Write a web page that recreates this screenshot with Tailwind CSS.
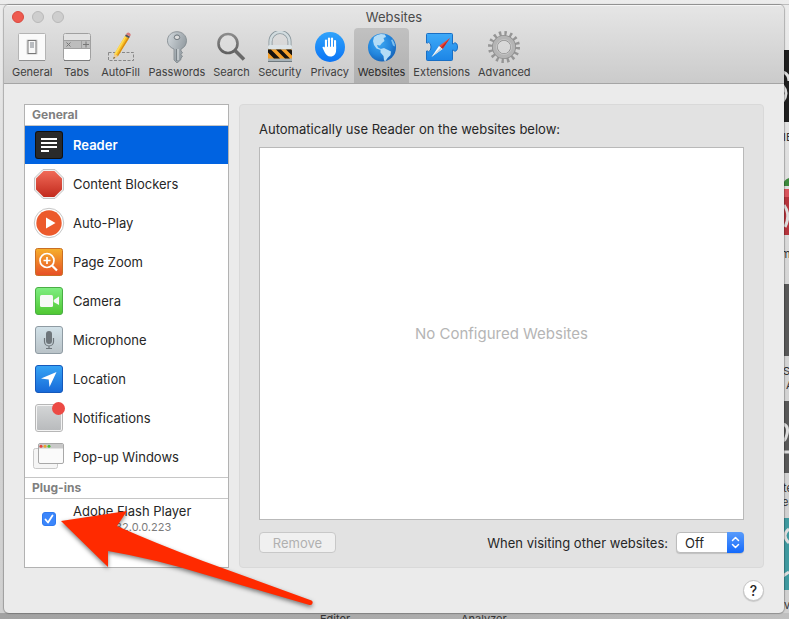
<!DOCTYPE html>
<html lang="en">
<head>
    <meta charset="UTF-8">
    <meta name="viewport" content="width=device-width, initial-scale=1.0">
    <title>Websites</title>
    <script src="https://cdn.jsdelivr.net/npm/@tailwindcss/browser@4"></script>
</head>
<body class="relative flex min-h-screen overflow-hidden bg-[#cfcfcf] pt-[5px] pr-[5px] pb-[6px] pl-1 font-['Inter',sans-serif] text-[13px] leading-4 text-[#262626]">

    <!-- Desktop behind the window -->
    <div class="absolute inset-0 overflow-hidden bg-linear-to-b from-[#ececec] via-[#d4d4d4] to-[#d0d0d0] text-[11px] leading-3 text-[#333]" aria-hidden="true">
        <div class="absolute top-1 right-0 left-0 h-px bg-[#bdbdbd]"></div>
        <div class="absolute right-0 bottom-0 left-0 h-[6px] bg-linear-to-r from-[#a2a2a2] via-[#ababab] to-[#c0c0c0]"></div>
        <span class="absolute top-[613px] left-[320px]">Editor</span>
        <span class="absolute top-[613px] left-[461px]">Analyzer</span>
        <svg class="absolute top-0 right-0 h-[619px] w-2" viewBox="0 0 8 619">
            <rect y="50" width="8" height="72" fill="#1f1f1f"/>
            <path d="M2 72q6 2 6 9M2 86q6 7 0 15" fill="none" stroke="#ddd" stroke-width="3"/>
            <path d="M2 186q0-6 6-8v8z" fill="#3d8a3d"/>
            <rect y="189" width="8" height="46" fill="#b5343c"/>
            <rect y="189" width="8" height="8" fill="#d9545c"/>
            <path d="M3 205q7 10 1 22" fill="none" stroke="#ddd" stroke-width="3"/>
            <rect y="284" width="8" height="72" fill="#585858"/>
            <rect y="401" width="8" height="72" fill="#585858"/>
            <path d="M2 424q6 2 4 10t-4 6M2 452h6" fill="none" stroke="#ddd" stroke-width="3"/>
            <rect y="518" width="8" height="72" fill="#3f999f"/>
            <path d="M8 529q-8 6 0 14M2 576l6-4" fill="none" stroke="#ddd" stroke-width="3"/>
        </svg>
        <span class="absolute top-[131px] left-[783px]">IE</span>
        <span class="absolute top-[248px] left-[781px]">m</span>
        <span class="absolute top-[365px] left-[783px]">S</span>
        <span class="absolute top-[379px] left-[786px]">A</span>
        <span class="absolute top-[482px] left-[783px]">te</span>
        <span class="absolute top-[496px] left-[782px]">ea</span>
        <span class="absolute top-[599px] left-[784px]">v</span>
    </div>

    <div class="relative flex min-w-0 flex-1 flex-col overflow-hidden rounded-[5px] bg-[#ebebeb] shadow-[0_0_1px_1px_rgba(0,0,0,0.25)]">

        <!-- Title bar and toolbar -->
        <header class="border-b border-[#a5a5a5] bg-linear-to-b from-[#e6e6e6] to-[#cbcbcb] shadow-[inset_0_1px_0_#f6f6f6]">
            <div class="relative flex h-[23px] items-center justify-center">
                <div class="absolute left-2 flex gap-2">
                    <button class="size-3 rounded-full border border-[#d9493f] bg-[#ee5b50]" aria-label="Close"></button>
                    <button class="size-3 rounded-full border border-[#b9b9b9] bg-[#cecece]" aria-label="Minimize"></button>
                    <button class="size-3 rounded-full border border-[#b9b9b9] bg-[#cecece]" aria-label="Zoom"></button>
                </div>
                <h1 class="text-[#4a4a4a]">Websites</h1>
            </div>

            <nav class="flex h-[55px] pl-1 text-[11px] leading-4 text-[#404040]">
                <button class="flex min-w-10 flex-col items-center gap-px px-1 pt-[3px]">
                    <svg class="size-8" viewBox="0 0 32 32">
                        <rect x="2.500" y="2.500" width="27" height="27" rx="1" fill="#fafafa" stroke="#b4b4b4"/>
                        <path d="M3 29.500h26" stroke="#8f8f8f"/>
                        <rect x="10" y="8" width="12" height="16" rx="2" fill="#e4e4e4"/>
                        <rect x="12" y="9.500" width="8" height="13" fill="#f8f8f8" stroke="#777"/>
                        <rect x="14" y="11" width="4" height="6" fill="#b9bcc0"/>
                    </svg>
                    General
                </button>
                <button class="flex min-w-10 flex-col items-center gap-px px-1 pt-[3px]">
                    <svg class="size-8" viewBox="0 0 32 32">
                        <rect x="2.500" y="2.500" width="27" height="27" rx="2" fill="#fff" stroke="#a0a0a0"/>
                        <path d="M3 5q0-2 2-2h22q2 0 2 2v4H3z" fill="#e2e2e2"/>
                        <path d="M3 9h26v8H3z" fill="#bdbdbd"/>
                        <path d="M3 9.500h26M3 17.500h26M20.500 10v7" stroke="#a0a0a0"/>
                        <path d="M5.500 11.500l4 4m0-4l-4 4M22 13.500h6M25 10.500v6" stroke="#777"/>
                        <path d="M3 29.500h26" stroke="#7c7c7c"/>
                    </svg>
                    Tabs
                </button>
                <button class="flex min-w-12 flex-col items-center gap-px px-1 pt-[3px]">
                    <svg class="size-8" viewBox="0 0 32 32">
                        <rect x="3.500" y="21.500" width="25" height="8" fill="none" stroke="#888" stroke-dasharray="3 1.500"/>
                        <path d="M8.500 28l.8-5L20 5l4 2.300L13 25z" fill="#f6bd22"/>
                        <path d="M9.300 23L20 5l1.300.8L10.800 24z" fill="#ffdc57"/>
                        <path d="M12 24.500L22.700 6.500l1.300.8L13 25z" fill="#d88b13"/>
                        <path d="M8.500 28l.8-5 3.700 2z" fill="#ecc99a"/>
                        <path d="M8.500 28l.3-2 1.200.7z" fill="#222"/>
                        <path d="M20 5l1-1.800 4 2.300-1 1.800z" fill="#50545a"/>
                        <path d="M21 3.200q1.400-2.500 3.500-1.200t.5 3.500z" fill="#d97a7a"/>
                    </svg>
                    AutoFill
                </button>
                <button class="flex min-w-10 flex-col items-center gap-px px-1 pt-[3px]">
                    <svg class="size-8" viewBox="0 0 32 32">
                        <defs>
                            <linearGradient id="key" x2="1" y2=".6"><stop stop-color="#d4dade"/><stop offset="1" stop-color="#8d969c"/></linearGradient>
                        </defs>
                        <path fill-rule="evenodd" d="M16 .7c5.500 0 9.500 4 9.500 9 0 4-2.300 7-5.500 8.300V20l1.500 1.500-1.500 2 1.500 2-1.500 1.500v1.500L16 32l-3-3V18c-4-1.500-6.500-4.500-6.500-8.300 0-5 4-9 9.500-9zM16 4a2.700 2.300 0 100 4.600A2.700 2.300 0 0016 4z" fill="url(#key)" stroke="#7d868c" stroke-width=".8"/>
                        <path d="M15.500 18v12" stroke="#7b8388" stroke-width="1.200"/>
                        <path d="M17 18v11" stroke="#e4e8ea"/>
                        <ellipse cx="16" cy="6.300" rx="2.700" ry="2.300" fill="#dcdcdc" stroke="#737c82"/>
                    </svg>
                    Passwords
                </button>
                <button class="flex min-w-10 flex-col items-center gap-px px-1 pt-[3px]">
                    <svg class="size-8" viewBox="0 0 32 32">
                        <defs>
                            <linearGradient id="lens" x2="0" y2="1"><stop stop-color="#8b8b8b"/><stop offset="1" stop-color="#606060"/></linearGradient>
                        </defs>
                        <circle cx="13" cy="12.500" r="9.500" fill="#e3e3e3" fill-opacity=".4" stroke="url(#lens)" stroke-width="2.600"/>
                        <path d="M20 19.500l9 9" stroke="#696969" stroke-width="3.600"/>
                    </svg>
                    Search
                </button>
                <button class="flex min-w-[52px] flex-col items-center gap-px px-1 pt-[3px]">
                    <svg class="size-8" viewBox="0 0 32 32">
                        <path d="M6.500 15v-4.500a9.500 9.500 0 0119 0V15" fill="none" stroke="#88959b" stroke-width="4"/>
                        <path d="M6.500 15v-4.500a9.500 9.500 0 0119 0V15" fill="none" stroke="#d2dcdf" stroke-width="2.400"/>
                        <rect x="4" y="14" width="24" height="17" rx="1.500" fill="#a8b3b8"/>
                        <rect x="4" y="14" width="24" height="4" rx="1.500" fill="#dde4e7"/>
                        <rect x="4" y="18.500" width="24" height="9" fill="#f6a12b"/>
                        <path d="M4 18.500h3l9 9h-6l-6-6zM12 18.500h5l9 9h-5zM22 18.500h5l1 1v5z" fill="#17130f"/>
                        <path d="M4 30.500h24" stroke="#6f797e"/>
                    </svg>
                    Security
                </button>
                <button class="flex min-w-12 flex-col items-center gap-px px-1 pt-[3px]">
                    <svg class="size-8" viewBox="0 0 32 32">
                        <defs>
                            <linearGradient id="privacy" x2="0" y2="1"><stop stop-color="#30a3fb"/><stop offset="1" stop-color="#0b74f5"/></linearGradient>
                        </defs>
                        <circle cx="16" cy="16" r="15" fill="url(#privacy)"/>
                        <path d="M12 18V9.500M15 16V7.500M18 16V7.500M21 18V10" stroke="#fff" stroke-width="2.200" stroke-linecap="round"/>
                        <path d="M10.900 15h11.200v4c0 4-2 6.500-5.600 6.500-3 0-4.500-1.700-5.700-4L8.600 17c-.5-1.300 1-2 2.300-.4z" fill="#fff"/>
                        <path d="M13.500 10v6M16.500 9v7M19.500 10v6" stroke="#1a87f7" stroke-width=".7"/>
                    </svg>
                    Privacy
                </button>
                <button class="flex min-w-10 flex-col items-center gap-px rounded-t-[4px] bg-black/13 px-1 pt-[3px] text-[#2a2a2a]" aria-current="page">
                    <svg class="size-8" viewBox="0 0 32 32">
                        <defs>
                            <radialGradient id="globe" cx=".4" cy=".35" r=".7"><stop stop-color="#3fa9f3"/><stop offset=".6" stop-color="#2385dc"/><stop offset="1" stop-color="#1560b4"/></radialGradient>
                        </defs>
                        <circle cx="16" cy="16.500" r="14" fill="url(#globe)"/>
                        <path d="M8 6q3-2.500 7-3l4 .5 1 2.500-2.500 1 1 3-2.500 2-2 2.500-3-.5 1 2.500 3 1.500-.5 1-4-1.500-2.500-3.500-1-4z" fill="#b4dcf6"/>
                        <path d="M14.500 18l3.500-1 3 1.500 4 2-.5 3.500-3 3-2 3-1.500-.5-.5-4.500-3-3.500z" fill="#b4dcf6"/>
                        <path d="M25 9l1.500-.5 2 4 .5 3-2-1z" fill="#7dbfee"/>
                    </svg>
                    Websites
                </button>
                <button class="flex min-w-10 flex-col items-center gap-px px-1 pt-[3px]">
                    <svg class="size-8" viewBox="0 0 32 32">
                        <defs>
                            <linearGradient id="puzzle" x2="0" y2="1"><stop stop-color="#3eaaf8"/><stop offset="1" stop-color="#1c85e6"/></linearGradient>
                        </defs>
                        <path d="M1.500 2.500h24q1 0 1 1v9.500q1.500 0 2-1.200 3 0 3 4.200t-3 4.200q-.5-1.200-2-1.200v9.500q0 1-1 1h-24q-1 0-1-1V20q1.500-.3 2 .7 2.500-.7 2.500-4.700t-2.500-4.700q-.5 1-2 .7V3.500q0-1 1-1z" fill="url(#puzzle)" stroke="#1a6fc4"/>
                        <path d="M24 7l-7.500 11-3.500-3z" fill="#ee4b3d"/>
                        <path d="M24 7l-7.500 11-1.800-1.500z" fill="#c02a22"/>
                        <path d="M5.500 26L13 15l3.500 3z" fill="#fff"/>
                        <path d="M5.500 26l9.200-9.500 1.800 1.500z" fill="#c7d0d8"/>
                    </svg>
                    Extensions
                </button>
                <button class="flex min-w-10 flex-col items-center gap-px px-1 pt-[3px]">
                    <svg class="size-8" viewBox="0 0 32 32">
                        <circle cx="16" cy="16" r="13.500" fill="none" stroke="#959595" stroke-width="5" stroke-dasharray="2.300 3.002"/>
                        <circle cx="16" cy="16" r="9.200" fill="none" stroke="#8f8f8f" stroke-width="5.800"/>
                        <circle cx="16" cy="16" r="9.200" fill="none" stroke="#b4b4b4" stroke-width="4"/>
                        <circle cx="16" cy="16" r="7.500" fill="none" stroke="#c6c6c6"/>
                    </svg>
                    Advanced
                </button>
            </nav>
        </header>

        <main class="flex flex-1 gap-[10px] px-5 pt-5">
            <!-- Sidebar -->
            <aside class="flex w-[205px] shrink-0 flex-col border border-[#b2b2b2] bg-white">
                <h2 class="h-[21px] border-b border-[#c6c6c6] pt-[2px] pl-[7px] text-xs font-bold text-[#808080]">General</h2>
                <ul>
                    <li class="mb-px">
                        <a href="#reader" class="flex h-[38px] items-center gap-[10px] bg-[#0063e1] pl-[10px] font-semibold text-white">
                            <svg class="size-7" viewBox="0 0 28 28">
                                <rect width="28" height="28" rx="3" fill="#101010"/>
                                <rect x="1" y="1" width="26" height="26" rx="2" fill="#2a2a2a"/>
                                <path d="M6 8h16M6 12h16M6 16h16M6 20h8" stroke="#fff" stroke-width="2"/>
                            </svg>
                            Reader
                        </a>
                    </li>
                    <li class="mb-px">
                        <a href="#blockers" class="flex h-[38px] items-center gap-[10px] pl-[10px]">
                            <svg class="size-7 overflow-visible" viewBox="0 0 28 28">
                                <defs>
                                    <linearGradient id="stop" x2="0" y2="1"><stop stop-color="#f06a58"/><stop offset="1" stop-color="#c22a1d"/></linearGradient>
                                </defs>
                                <path d="M8-.500h12l8.500 8.500v12L20 28.500H8L-.500 20V8z" fill="#f1f1f1" stroke="#c4c4c4"/>
                                <path d="M8.600 1h10.800L27 8.600v10.800L19.400 27H8.600L1 19.400V8.600z" fill="url(#stop)"/>
                            </svg>
                            Content Blockers
                        </a>
                    </li>
                    <li class="mb-px">
                        <a href="#autoplay" class="flex h-[38px] items-center gap-[10px] pl-[10px]">
                            <svg class="size-7 overflow-visible" viewBox="0 0 28 28">
                                <circle cx="14" cy="14" r="14.700" fill="#fff" stroke="#c6c6c6"/>
                                <circle cx="14" cy="14" r="12.700" fill="#ec5a2c"/>
                                <path d="M11 8.500l9.500 5.500-9.500 5.500z" fill="#fff"/>
                            </svg>
                            Auto-Play
                        </a>
                    </li>
                    <li class="mb-px">
                        <a href="#zoom" class="flex h-[38px] items-center gap-[10px] pl-[10px]">
                            <svg class="size-7" viewBox="0 0 28 28">
                                <defs>
                                    <linearGradient id="zoomBg" x2="0" y2="1"><stop stop-color="#f6b02c"/><stop offset="1" stop-color="#e74e26"/></linearGradient>
                                </defs>
                                <rect x=".500" y=".500" width="27" height="27" rx="2" fill="url(#zoomBg)" stroke="#c96f25"/>
                                <circle cx="12" cy="12.500" r="7" fill="none" stroke="#fff" stroke-width="1.700"/>
                                <path d="M8.500 12.500h7M12 9v7" stroke="#fff" stroke-width="1.700"/>
                                <path d="M17 17.500l5 5" stroke="#fff" stroke-width="2.200"/>
                            </svg>
                            Page Zoom
                        </a>
                    </li>
                    <li class="mb-px">
                        <a href="#camera" class="flex h-[38px] items-center gap-[10px] pl-[10px]">
                            <svg class="size-7" viewBox="0 0 28 28">
                                <defs>
                                    <linearGradient id="cameraBg" x2="0" y2="1"><stop stop-color="#7fee82"/><stop offset="1" stop-color="#4fc731"/></linearGradient>
                                </defs>
                                <rect x=".500" y=".500" width="27" height="27" rx="2.500" fill="url(#cameraBg)" stroke="#4aae45"/>
                                <rect x="5" y="8" width="13" height="12" rx="1.500" fill="#f7f9f7"/>
                                <path d="M18.700 13l5.300-3.500v8.500l-5.300-3z" fill="#f7f9f7"/>
                            </svg>
                            Camera
                        </a>
                    </li>
                    <li class="mb-px">
                        <a href="#microphone" class="flex h-[38px] items-center gap-[10px] pl-[10px]">
                            <svg class="size-7" viewBox="0 0 28 28">
                                <defs>
                                    <linearGradient id="micBg" x2="0" y2="1"><stop stop-color="#d2e2e9"/><stop offset="1" stop-color="#b9c2c7"/></linearGradient>
                                </defs>
                                <rect x=".500" y=".500" width="27" height="27" rx="2.500" fill="url(#micBg)" stroke="#8f9ba3"/>
                                <rect x="11" y="5" width="6" height="13" rx="3" fill="#6e767b"/>
                                <path d="M9.500 12v3.500a4.500 4.500 0 009 0V12M14 20v2.500M11 22.500h6" fill="none" stroke="#6e767b" stroke-width="1.200"/>
                            </svg>
                            Microphone
                        </a>
                    </li>
                    <li class="mb-px">
                        <a href="#location" class="flex h-[38px] items-center gap-[10px] pl-[10px]">
                            <svg class="size-7" viewBox="0 0 28 28">
                                <defs>
                                    <linearGradient id="locationBg" x2="0" y2="1"><stop stop-color="#37a5f5"/><stop offset="1" stop-color="#1769d8"/></linearGradient>
                                </defs>
                                <rect x=".500" y=".500" width="27" height="27" rx="2.500" fill="url(#locationBg)" stroke="#1559bb"/>
                                <path d="M21.500 7L14.500 22l-.8-7.500L6 13.500z" fill="#fff"/>
                            </svg>
                            Location
                        </a>
                    </li>
                    <li class="mb-px">
                        <a href="#notifications" class="flex h-[38px] items-center gap-[10px] pl-[10px]">
                            <svg class="size-7 overflow-visible" viewBox="0 0 28 28">
                                <defs>
                                    <linearGradient id="noteBg" x2="0" y2="1"><stop stop-color="#d3d5d6"/><stop offset="1" stop-color="#b9bbbd"/></linearGradient>
                                </defs>
                                <rect x=".500" y=".500" width="27" height="27" rx="2.500" fill="#f4f4f4" stroke="#b7b7b7"/>
                                <rect x="2" y="2" width="24" height="24" rx="1" fill="url(#noteBg)"/>
                                <circle cx="23.500" cy="4.500" r="6.500" fill="#ec4a44"/>
                            </svg>
                            Notifications
                        </a>
                    </li>
                    <li class="mb-px">
                        <a href="#popups" class="flex h-[38px] items-center gap-[10px] pl-[10px]">
                            <svg class="size-7 overflow-visible" viewBox="0 0 28 28">
                                <rect x="-1.500" y="5.500" width="24" height="20" rx="2" fill="#f5f5f5" stroke="#c9c9c9"/>
                                <rect x="3.500" y=".500" width="25" height="20" rx="1.500" fill="#fafafa" stroke="#a8a8a8"/>
                                <path d="M4 2q0-1 1-1h22q1 0 1 1v3.500H4z" fill="#c9c9c9"/>
                                <circle cx="6" cy="3.200" r="1.500" fill="#e5453e"/>
                                <circle cx="10" cy="3.200" r="1.500" fill="#e9a431"/>
                                <circle cx="14" cy="3.200" r="1.500" fill="#4fbb3b"/>
                            </svg>
                            Pop-up Windows
                        </a>
                    </li>
                </ul>
                <h2 class="h-[22px] border-y border-[#c6c6c6] pt-[2px] pl-[7px] text-xs font-bold text-[#808080]">Plug-ins</h2>
                <div class="flex items-center pt-1 pl-[17px]">
                    <span class="relative mr-[17px] size-[14px]">
                        <input type="checkbox" id="flash" checked class="block size-[14px] appearance-none rounded-[3px] border border-[#b5b5b5] bg-white checked:border-[#2f7af0] checked:bg-[#3b86fb]">
                        <svg class="pointer-events-none absolute inset-0 size-[14px]" viewBox="0 0 14 14">
                            <path d="M3.500 7.500L6 10.500l4.500-7" fill="none" stroke="#fff" stroke-width="1.800" stroke-linecap="round" stroke-linejoin="round"/>
                        </svg>
                    </span>
                    <label for="flash">
                        Adobe Flash Player
                        <span class="block text-[11px] leading-4 text-[#7b7b7b]">Version 32.0.0.223</span>
                    </label>
                </div>
            </aside>

            <!-- Reader settings -->
            <section class="flex min-w-0 flex-1 flex-col rounded-[4px] border border-[#d9d9d9] bg-[#e2e2e2] px-[19px] pt-4 pb-[14px]">
                <h2>Automatically use Reader on the websites below:</h2>
                <div class="mt-[10px] flex flex-1 items-center justify-center border border-[#b9b9b9] bg-white text-[15px] text-[#b5b5b5]">
                    No Configured Websites
                </div>
                <div class="mt-3 flex items-center">
                    <button disabled class="h-[21px] w-[77px] rounded-[4px] border border-[#c8c8c8] bg-[#f0f0f0] leading-4 text-[#b0b0b0]">Remove</button>
                    <label for="others" class="ml-auto">When visiting other websites:</label>
                    <div class="relative ml-2 h-[21px] w-[68px]">
                        <select id="others" class="block size-full appearance-none rounded-[4px] border border-[#bcbcbc] bg-white pl-2 leading-4 shadow-[0_1px_1px_rgba(0,0,0,0.15)]">
                            <option>Off</option>
                            <option>On</option>
                        </select>
                        <svg class="pointer-events-none absolute top-0 right-0 h-[21px] w-[17px] rounded-r-[4px] bg-linear-to-b from-[#589bfb] to-[#1169fb]" viewBox="0 0 17 21">
                            <path d="M5.500 8.500l3-3 3 3M5.500 12.500l3 3 3-3" fill="none" stroke="#fff" stroke-width="1.500" stroke-linecap="round" stroke-linejoin="round"/>
                        </svg>
                    </div>
                </div>
            </section>
        </main>

        <footer class="flex h-[45px] justify-end pt-3 pr-5">
            <button class="size-[21px] rounded-full border border-[#c4c4c4] bg-white text-sm leading-4 font-medium shadow-[0_1px_1px_rgba(0,0,0,0.15)]" aria-label="Help">?</button>
        </footer>
    </div>

    <!-- Arrow pointing at the plug-in tick box -->
    <svg class="pointer-events-none absolute top-[505px] left-[55px] h-[110px] w-[270px] drop-shadow-[0_2px_2px_rgba(0,0,0,0.5)]" viewBox="55 505 270 110">
        <path d="M61 521l66-10-10 15Q155 543 203 561L311.500 600.500a2.500 2.500 0 01-2 4.500L203 574Q155 559 108 551v16z" fill="#ff2a00"/>
    </svg>
</body>
</html>
